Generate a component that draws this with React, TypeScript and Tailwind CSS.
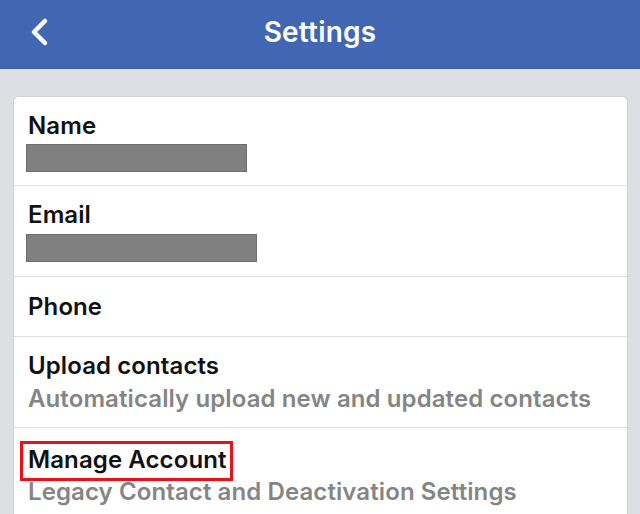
import React from "react";

function Bar({ w }: { w: string }) {
  return <div className={`h-[28px] ${w} -ml-[2px] bg-[#808080] border border-[#6f6f6f]`} />;
}

export default function App() {
  return (
    <div className="w-[640px] h-[514px] overflow-hidden bg-[#dddfe2] font-['Inter',sans-serif]">
      <div className="h-[69px] bg-[#4267b2] border-b border-[#3a5da3] relative flex items-center justify-center">
        <svg className="absolute left-[28px] top-[17px]" width="24" height="30" viewBox="0 0 24 30">
          <path d="M17 4 L6 15 L17 26" fill="none" stroke="white" strokeWidth="4.5" strokeLinecap="round" strokeLinejoin="round" />
        </svg>
        <span className="text-white text-[28px] font-semibold tracking-[0.2px] -mt-[4px]">Settings</span>
      </div>
      <div className="pt-[27px] pl-[13px] pr-[12px]">
        <div className="bg-white rounded-[6px] border border-[#cfd2d7] text-[#111111] text-[24px] font-semibold tracking-[0.1px]">
          <div className="pl-[14px] pt-[15px] h-[89px] border-b border-[#dfe0e3]">
            <div className="leading-[28px]">Name</div>
            <div className="mt-[4px]"><Bar w="w-[221px]" /></div>
          </div>
          <div className="pl-[14px] pt-[15px] h-[91px] border-b border-[#dfe0e3]">
            <div className="leading-[28px]">Email</div>
            <div className="mt-[5px]"><Bar w="w-[231px]" /></div>
          </div>
          <div className="pl-[14px] h-[60px] border-b border-[#dfe0e3] flex items-center">
            <div className="leading-[28px]">Phone</div>
          </div>
          <div className="pl-[14px] pt-[15px] h-[91px] border-b border-[#dfe0e3]">
            <div className="leading-[28px]">Upload contacts</div>
            <div className="leading-[32px] mt-[3px] text-[#858585]">Automatically upload new and updated contacts</div>
          </div>
          <div className="pl-[14px] pt-[14px] h-[100px]">
            <div className="leading-[28px] relative inline-block">
              Manage Account
              <div className="absolute left-[-8px] top-[-5px] w-[213px] h-[40px] border-[3px] border-[#e8121a]" />
            </div>
            <div className="leading-[32px] -mt-[2px] text-[#858585]">Legacy Contact and Deactivation Settings</div>
          </div>
        </div>
      </div>
    </div>
  );
}
